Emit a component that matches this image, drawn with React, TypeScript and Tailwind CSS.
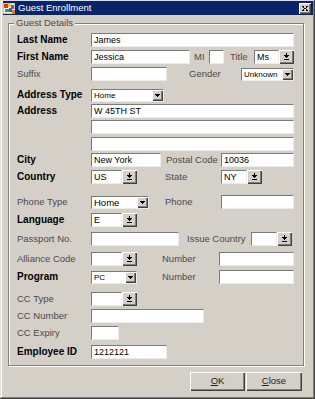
import type { ReactNode } from "react";

const sunken =
  "border border-t-[#7b7b7b] border-l-[#7b7b7b] border-b-[#ececec] border-r-[#ececec] bg-white";
const raised =
  "bg-[#d4d0c8] shadow-[inset_1px_1px_0_#fff,inset_-1px_-1px_0_#404040,inset_-2px_-2px_0_#808080]";

function Label({
  children,
  bold,
  className = "",
}: {
  children: ReactNode;
  bold?: boolean;
  className?: string;
}) {
  return (
    <span
      className={`shrink-0 whitespace-nowrap leading-[12px] ${
        bold ? "text-[10px] font-bold text-black" : "text-[9.5px] text-[#4a4a4a]"
      } ${className}`}
    >
      {children}
    </span>
  );
}

function TextBox({ value = "", className = "" }: { value?: string; className?: string }) {
  return (
    <div
      className={`h-[14px] shrink-0 overflow-hidden whitespace-nowrap pl-[2px] text-[9px] leading-[12px] text-black ${sunken} ${className}`}
    >
      {value}
    </div>
  );
}

function LovButton() {
  return (
    <div className={`flex h-[14px] w-[15px] shrink-0 items-center justify-center ${raised}`}>
      <svg width="7" height="8" viewBox="0 0 7 8" shapeRendering="crispEdges">
        <rect x="3" y="0" width="1" height="2" fill="#000" />
        <rect x="1" y="2" width="5" height="1" fill="#000" />
        <rect x="2" y="3" width="3" height="1" fill="#000" />
        <rect x="3" y="4" width="1" height="1" fill="#000" />
        <rect x="1" y="6" width="5" height="1" fill="#000" />
      </svg>
    </div>
  );
}

function Lov({ value = "", boxClass }: { value?: string; boxClass: string }) {
  return (
    <div className="flex shrink-0">
      <TextBox value={value} className={boxClass} />
      <LovButton />
    </div>
  );
}

function Combo({
  value,
  className = "",
  textClass = "text-[8px]",
}: {
  value: string;
  className?: string;
  textClass?: string;
}) {
  return (
    <div className={`flex h-[13px] shrink-0 items-center ${sunken} ${className}`}>
      <span className={`flex-1 overflow-hidden whitespace-nowrap pl-[2px] leading-[11px] text-black ${textClass}`}>
        {value}
      </span>
      <div className={`flex h-[11px] w-[11px] shrink-0 items-center justify-center ${raised}`}>
        <svg width="5" height="3" viewBox="0 0 5 3" shapeRendering="crispEdges">
          <rect x="0" y="0" width="5" height="1" fill="#000" />
          <rect x="1" y="1" width="3" height="1" fill="#000" />
          <rect x="2" y="2" width="1" height="1" fill="#000" />
        </svg>
      </div>
    </div>
  );
}

function Row({ children, className = "" }: { children: ReactNode; className?: string }) {
  return <div className={`flex h-[14px] items-center ${className}`}>{children}</div>;
}

function AppIcon() {
  return (
    <svg width="13" height="13" viewBox="0 0 13 13" shapeRendering="crispEdges">
      <rect x="0" y="1" width="12" height="11" fill="#c8c8c8" />
      <rect x="1" y="2" width="10" height="9" fill="#f4f4f4" />
      <rect x="1" y="2" width="4" height="4" fill="#d83a2a" />
      <rect x="5" y="2" width="3" height="3" fill="#f2c530" />
      <rect x="8" y="3" width="3" height="4" fill="#8a4bb8" />
      <rect x="2" y="7" width="4" height="3" fill="#3c9a3c" />
      <rect x="6" y="6" width="3" height="4" fill="#2f64c8" />
      <rect x="9" y="8" width="3" height="4" fill="#e07a24" />
    </svg>
  );
}

export default function App() {
  return (
    <div className="h-[399px] w-[315px] overflow-hidden bg-[#d4d0c8] pl-[3px] pr-[2px] pt-[1px] font-['Liberation_Sans',Arial,sans-serif] shadow-[inset_-1px_-1px_0_#404040,inset_1px_1px_0_#dfdfdf,inset_-2px_-2px_0_#808080,inset_2px_2px_0_#fff]">
      {/* Title bar */}
      <div className="flex h-[14px] items-center bg-[#0a246a]">
        <AppIcon />
        <span className="ml-[2px] text-[9.5px] leading-[12px] text-white">Guest Enrollment</span>
        <div className={`ml-auto mr-[2px] flex h-[11px] w-[12px] items-center justify-center ${raised}`}>
          <svg width="6" height="5" viewBox="0 0 6 5" shapeRendering="crispEdges">
            <path d="M0 0h2v1H0zM4 0h2v1H4zM1 1h1v1H1zM4 1h1v1H4zM2 2h2v1H2zM1 3h1v1H1zM4 3h1v1H4zM0 4h2v1H0zM4 4h2v1H4z" fill="#000" />
          </svg>
        </div>
      </div>

      {/* Guest Details group */}
      <div className="relative ml-[5px] mt-[8px] w-[296px] border border-[#808080] pb-[6px] pl-[8px] pt-[9px] shadow-[inset_1px_1px_0_#fff,1px_1px_0_#fff]">
        <span className="absolute left-[5px] top-[-7px] bg-[#d4d0c8] px-[2px] text-[9.5px] leading-[12px] text-[#4a4a4a]">
          Guest Details
        </span>

        <Row>
          <Label bold className="w-[74px]">Last Name</Label>
          <TextBox value="James" className="w-[203px]" />
        </Row>

        <Row className="mt-[3px]">
          <Label bold className="w-[74px]">First Name</Label>
          <TextBox value="Jessica" className="w-[99px]" />
          <Label className="ml-[4px] w-[15px]">MI</Label>
          <TextBox className="w-[15px]" />
          <Label className="ml-[6px] w-[24px]">Title</Label>
          <Lov value="Ms" boxClass="w-[25px]" />
        </Row>

        <Row className="mt-[3px]">
          <Label className="w-[74px]">Suffix</Label>
          <TextBox className="w-[76px]" />
          <Label className="ml-[22px] w-[52px]">Gender</Label>
          <Combo value="Unknown" className="w-[53px]" />
        </Row>

        <Row className="mt-[7px]">
          <Label bold className="w-[74px]">Address Type</Label>
          <Combo value="Home" className="w-[73px]" />
        </Row>

        <Row className="mt-[2px]">
          <Label bold className="w-[74px]">Address</Label>
          <TextBox value="W 45TH ST" className="w-[203px]" />
        </Row>
        <Row className="mt-[2px]">
          <span className="w-[74px] shrink-0" />
          <TextBox className="w-[203px]" />
        </Row>
        <Row className="mt-[3px]">
          <span className="w-[74px] shrink-0" />
          <TextBox className="w-[203px]" />
        </Row>

        <Row className="mt-[2px]">
          <Label bold className="w-[74px]">City</Label>
          <TextBox value="New York" className="w-[70px]" />
          <Label className="ml-[5px] w-[55px]">Postal Code</Label>
          <TextBox value="10036" className="w-[73px]" />
        </Row>

        <Row className="mt-[3px]">
          <Label bold className="w-[74px]">Country</Label>
          <Lov value="US" boxClass="w-[31px]" />
          <Label className="ml-[28px] w-[56px]">State</Label>
          <Lov value="NY" boxClass="w-[26px]" />
        </Row>

        <Row className="mt-[11px]">
          <Label className="w-[74px]">Phone Type</Label>
          <Combo value="Home" className="w-[58px]" textClass="text-[9.5px]" />
          <Label className="ml-[16px] w-[56px]">Phone</Label>
          <TextBox className="w-[73px]" />
        </Row>

        <Row className="mt-[4px]">
          <Label bold className="w-[74px]">Language</Label>
          <Lov value="E" boxClass="w-[31px]" />
        </Row>

        <Row className="mt-[5px]">
          <Label className="w-[74px]">Passport No.</Label>
          <TextBox className="w-[88px]" />
          <Label className="ml-[8px] w-[64px]">Issue Country</Label>
          <Lov boxClass="w-[26px]" />
        </Row>

        <Row className="mt-[6px]">
          <Label className="w-[74px]">Alliance Code</Label>
          <Lov boxClass="w-[31px]" />
          <Label className="ml-[25px] w-[57px]">Number</Label>
          <TextBox className="w-[75px]" />
        </Row>

        <Row className="mt-[4px]">
          <Label bold className="w-[74px]">Program</Label>
          <Combo value="PC" className="w-[46px]" />
          <Label className="ml-[25px] w-[57px]">Number</Label>
          <TextBox className="w-[75px]" />
        </Row>

        <Row className="mt-[8px]">
          <Label className="w-[74px]">CC Type</Label>
          <Lov boxClass="w-[31px]" />
        </Row>

        <Row className="mt-[3px]">
          <Label className="w-[74px]">CC Number</Label>
          <TextBox className="w-[113px]" />
        </Row>

        <Row className="mt-[3px]">
          <Label className="w-[74px]">CC Expiry</Label>
          <TextBox className="w-[28px]" />
        </Row>

        <Row className="mt-[5px]">
          <Label bold className="w-[74px]">Employee ID</Label>
          <TextBox value="1212121" className="w-[76px]" />
        </Row>
      </div>

      {/* Buttons */}
      <div className="mt-[6px] flex justify-end gap-[1px] pr-[11px]">
        <button className={`h-[19px] w-[55px] text-[9.5px] text-[#222] ${raised}`}>
          <span className="underline">O</span>K
        </button>
        <button className={`h-[19px] w-[56px] text-[9.5px] text-[#222] ${raised}`}>
          <span className="underline">C</span>lose
        </button>
      </div>
    </div>
  );
}
